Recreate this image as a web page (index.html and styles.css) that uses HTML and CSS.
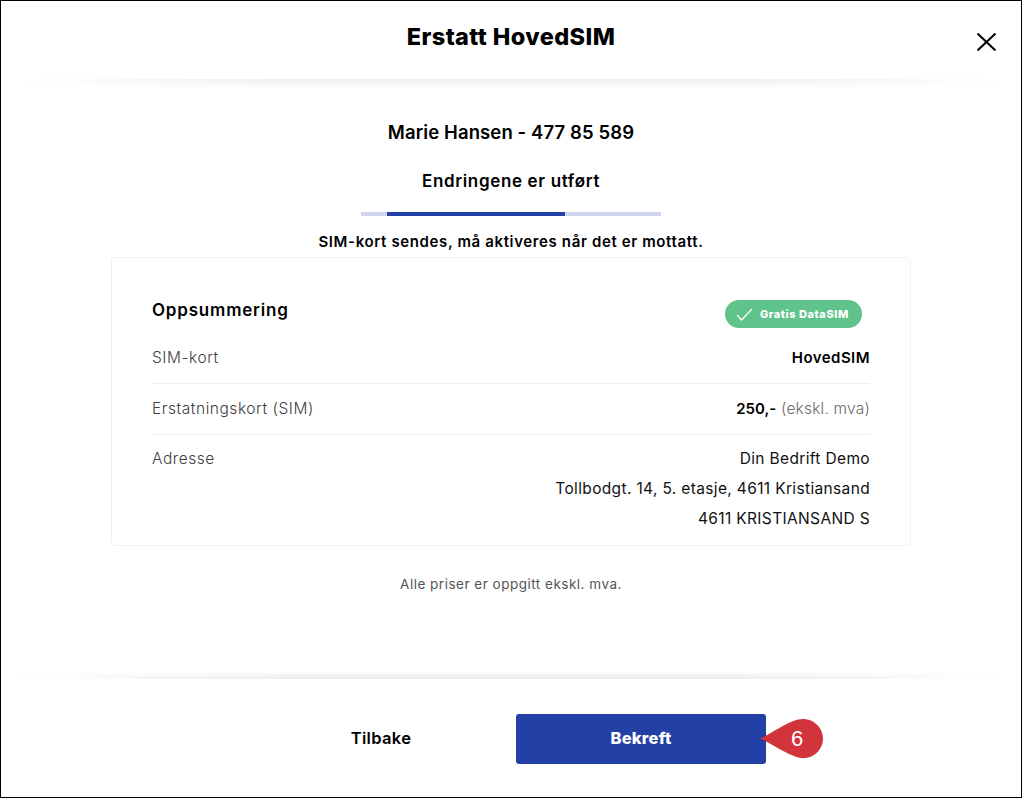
FILE: index.html
```html
<!DOCTYPE html>
<html lang="no">
<head>
<meta charset="utf-8">
<title>Erstatt HovedSIM</title>
<link rel="stylesheet" href="styles.css">
</head>
<body>
<div class="frame">
  <header class="top">
    <h1 class="title">Erstatt HovedSIM</h1>
    <button class="close" aria-label="Lukk">
      <svg width="20" height="18" viewBox="0 0 20 18"><path d="M0.500 0.500 18.500 17.500M18.500 0.500 0.500 17.500" fill="none" stroke="#000" stroke-width="2"/></svg>
    </button>
  </header>
  <div class="fade fade-down"></div>
  <main class="main">
    <h2 class="name">Marie Hansen - 477 85 589</h2>
    <h3 class="step">Endringene er utført</h3>
    <div class="track"><div class="fill"></div></div>
    <p class="note">SIM-kort sendes, må aktiveres når det er mottatt.</p>
    <section class="card">
      <div class="card-head">
        <h4 class="card-title">Oppsummering</h4>
        <span class="badge">
          <svg width="17" height="13" viewBox="0 0 17 13"><path d="M1 7 5.500 12 16 1" fill="none" stroke="#fff" stroke-width="1.2"/></svg>
          Gratis DataSIM
        </span>
      </div>
      <div class="row first">
        <span class="label">SIM-kort</span>
        <span class="value"><b>HovedSIM</b></span>
      </div>
      <div class="row">
        <span class="label">Erstatningskort (SIM)</span>
        <span class="value"><b class="price">250,-</b> <span class="muted">(ekskl. mva)</span></span>
      </div>
      <div class="row last">
        <span class="label">Adresse</span>
        <span class="value address">Din Bedrift Demo<br>Tollbodgt. 14, 5. etasje, 4611 Kristiansand<br>4611 KRISTIANSAND S</span>
      </div>
    </section>
    <p class="prices">Alle priser er oppgitt ekskl. mva.</p>
  </main>
  <div class="fade fade-up"></div>
  <footer class="bottom">
    <button class="back">Tilbake</button>
    <button class="confirm">Bekreft
      <span class="pin">
        <svg width="65" height="42" viewBox="0 0 65 42"><path d="M1 20.500C10 17 26 5 39 1.500 52-1.500 64 8 64 20.500 64 33 52 43 39 39.500 26 36 10 24 1 20.500Z" fill="#d2343c"/></svg>
        <span class="pin-num">6</span>
      </span>
    </button>
  </footer>
</div>
</body>
</html>
```
FILE: styles.css
```css
* { box-sizing: border-box; }
html, body { margin: 0; padding: 0; background: #fff; }
body { font-family: Inter, Lato, "Noto Sans", sans-serif; color: #000; }
.frame {
  width: 1022px; height: 798px;
  border: 1px solid #000;
  display: flex; flex-direction: column;
  overflow: hidden;
}
.top { height: 78px; flex: none; position: relative; display: flex; justify-content: center; padding-top: 20px; }
.title { margin: 0; font-size: 23.500px; line-height: 32px; font-weight: 800; letter-spacing: .4px; }
.close { position: absolute; left: 976px; top: 32px; width: 20px; height: 18px; padding: 0; border: 0; background: none; display: block; }
.close svg { display: block; }
.fade { height: 10px; flex: none; margin: 0 10px; }
.fade-down {
  background: linear-gradient(to bottom, rgba(0,0,0,.075), rgba(0,0,0,0));
  -webkit-mask-image: linear-gradient(to right, transparent, #000 30%, #000 70%, transparent);
  mask-image: linear-gradient(to right, transparent, #000 30%, #000 70%, transparent);
}
.fade-up {
  height: 8px;
  background: linear-gradient(to top, rgba(0,0,0,.085), rgba(0,0,0,0));
  -webkit-mask-image: linear-gradient(to right, transparent, #000 30%, #000 70%, transparent);
  mask-image: linear-gradient(to right, transparent, #000 30%, #000 70%, transparent);
}
.main { flex: 1; display: flex; flex-direction: column; align-items: center; padding-top: 30px; }
.name { margin: 0; font-size: 18.500px; line-height: 26px; font-weight: 600; letter-spacing: .1px; }
.step { margin: 24px 0 0; font-size: 17px; line-height: 24px; font-weight: 600; letter-spacing: .65px; }
.track { width: 300px; height: 4px; margin-top: 19px; background: #ced5ec; padding-left: 26px; }
.fill { width: 178px; height: 4px; background: #2340a6; }
.note { margin: 16px 0 0; font-size: 15px; line-height: 20px; font-weight: 600; letter-spacing: .63px; }
.card {
  width: 800px; height: 289px; margin-top: 5px;
  border: 1px solid #f0f0f0; border-radius: 4px;
  padding: 35px 40px 0;
}
.card-head { display: flex; justify-content: space-between; align-items: flex-start; height: 40px; padding-right: 8px; }
.card-title { margin: 4px 0 0; font-size: 17px; line-height: 26px; font-weight: 600; letter-spacing: .8px; }
.badge {
  width: 137px; height: 28px; margin-top: 7px; border-radius: 14px; background: #60c38c; color: #fff;
  display: flex; align-items: center; padding-left: 11px; gap: 7px;
  font-size: 11px; line-height: 14px; font-weight: 800; letter-spacing: .55px;
}
.row { display: flex; justify-content: space-between; height: 51px; padding-top: 10px; border-bottom: 1px solid #eee; font-size: 15.500px; line-height: 30px; letter-spacing: .35px; }
.row.last { border-bottom: 0; height: auto; padding-top: 9px; }
.label { color: #404040; font-weight: 300; letter-spacing: .55px; }
.value { text-align: right; color: #111; }
.value b { font-size: 15px; font-weight: 600; color: #000; letter-spacing: .45px; }
.value .price { letter-spacing: 0; }
.muted { color: #6a6a6a; font-weight: 300; letter-spacing: .2px; }
.prices { margin: 28px 0 0; font-size: 13.500px; line-height: 20px; color: #555; letter-spacing: .5px; }
.bottom { height: 118px; flex: none; display: flex; align-items: flex-start; padding: 35px 0 0 280px; }
.back { width: 200px; height: 50px; padding: 0 0 2px; border: 0; background: none; font-family: inherit; font-size: 16.500px; line-height: 46px; font-weight: 600; letter-spacing: .35px; color: #000; }
.confirm { position: relative; width: 250px; height: 50px; margin-left: 35px; padding: 0 0 2px; border: 0; border-radius: 3px; background: #2340a6; color: #fff; font-family: inherit; font-size: 16.500px; line-height: 46px; font-weight: 800; letter-spacing: .2px; }
.pin { position: absolute; left: 243px; top: 4px; width: 65px; height: 42px; display: block; }
.pin svg { display: block; }
.pin-num { position: absolute; left: 26px; top: 0; width: 24px; text-align: center; font: 400 22px/42px "Liberation Sans", sans-serif; letter-spacing: 0; color: #fff; }
```
